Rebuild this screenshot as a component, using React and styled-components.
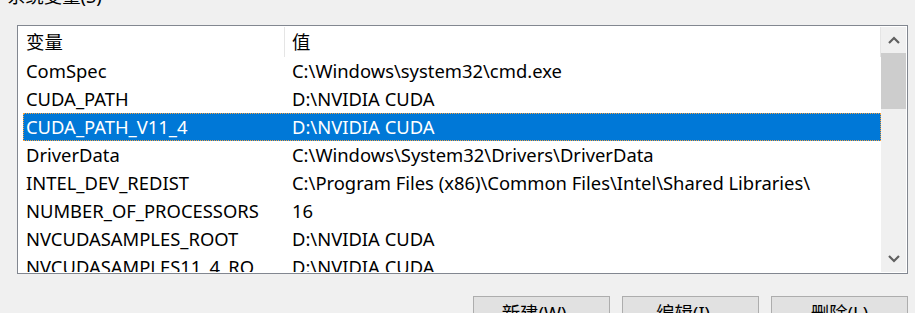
import React from 'react';
import styled, { createGlobalStyle } from 'styled-components';

const GlobalStyle = createGlobalStyle`
  html, body {
    margin: 0;
    padding: 0;
    background: #f0f0f0;
    overflow: hidden;
  }
  body {
    font-family: "Noto Sans", "Noto Sans CJK SC", sans-serif;
    font-size: 18.4px;
    color: #000;
  }
`;

const Page = styled.div`
  width: 915px;
  height: 313px;
  overflow: hidden;
  display: flex;
  flex-direction: column;
`;

const GroupTitle = styled.div`
  margin: -16px 0 0 7px;
  height: 24px;
  line-height: 24px;
`;

const ListBox = styled.div`
  margin: 17px 0 0 17px;
  width: 891px;
  height: 249px;
  box-sizing: border-box;
  border: 1px solid #828790;
  background: #fff;
  padding: 1px;
  display: flex;
`;

const ListBody = styled.div`
  flex: 1;
  overflow: hidden;
  padding-left: 4px;
`;

const HeaderRow = styled.div`
  display: grid;
  grid-template-columns: 262px 1fr;
  height: 30px;
  align-items: center;
`;

const HeaderCell = styled.div`
  height: 30px;
  line-height: 30px;
  padding-left: ${(p) => p.$pad}px;
  border-right: 1px solid #e5e5e5;
  box-sizing: border-box;
`;

const Row = styled.div`
  display: grid;
  grid-template-columns: 262px 1fr;
  height: 28px;
  line-height: 28px;
  box-sizing: border-box;
  white-space: nowrap;
  background: ${(p) => (p.$selected ? '#0078d7' : 'transparent')};
  color: ${(p) => (p.$selected ? '#fff' : '#000')};
  outline: ${(p) => (p.$selected ? '1px dotted #f5a040' : 'none')};
  outline-offset: -1px;
`;

const Cell = styled.div`
  padding-left: ${(p) => p.$pad}px;
  overflow: hidden;
`;

const ScrollBar = styled.div`
  width: 25px;
  display: flex;
  flex-direction: column;
  background: #f0f0f0;
`;

const ArrowBtn = styled.div`
  height: 26px;
  display: flex;
  align-items: center;
  justify-content: center;
  flex-shrink: 0;
`;

const Track = styled.div`
  flex: 1;
  display: flex;
  flex-direction: column;
`;

const Thumb = styled.div`
  height: 56px;
  background: #cdcdcd;
`;

const ButtonRow = styled.div`
  display: flex;
  justify-content: flex-end;
  gap: 12px;
  margin-top: 22px;
  padding-right: 7px;
`;

const DialogButton = styled.button`
  width: 137px;
  height: 34px;
  box-sizing: border-box;
  background: #e1e1e1;
  border: 1px solid #adadad;
  font-family: "Noto Sans", "Noto Sans CJK SC", sans-serif;
  font-size: 18.4px;
  color: #000;
  padding: 0;
  line-height: 32px;
`;

const Chevron = ({ up }) => (
  <svg width="12" height="8" viewBox="0 0 12 8">
    <polyline
      points={up ? '1,7 6,2 11,7' : '1,1 6,6 11,1'}
      fill="none"
      stroke="#606060"
      strokeWidth="2.2"
    />
  </svg>
);

const rows = [
  ['ComSpec', 'C:\\Windows\\system32\\cmd.exe'],
  ['CUDA_PATH', 'D:\\NVIDIA CUDA'],
  ['CUDA_PATH_V11_4', 'D:\\NVIDIA CUDA'],
  ['DriverData', 'C:\\Windows\\System32\\Drivers\\DriverData'],
  ['INTEL_DEV_REDIST', 'C:\\Program Files (x86)\\Common Files\\Intel\\Shared Libraries\\'],
  ['NUMBER_OF_PROCESSORS', '16'],
  ['NVCUDASAMPLES_ROOT', 'D:\\NVIDIA CUDA'],
  ['NVCUDASAMPLES11_4_RO', 'D:\\NVIDIA CUDA'],
];

const App = () => (
  <>
    <GlobalStyle />
    <Page>
      <GroupTitle>系统变量(S)</GroupTitle>
      <ListBox>
        <ListBody>
          <HeaderRow>
            <HeaderCell $pad={3}>变量</HeaderCell>
            <HeaderCell $pad={7}>值</HeaderCell>
          </HeaderRow>
          {rows.map(([name, value], i) => (
            <Row key={name} $selected={i === 2}>
              <Cell $pad={3}>{name}</Cell>
              <Cell $pad={7}>{value}</Cell>
            </Row>
          ))}
        </ListBody>
        <ScrollBar>
          <ArrowBtn>
            <Chevron up />
          </ArrowBtn>
          <Track>
            <Thumb />
          </Track>
          <ArrowBtn>
            <Chevron />
          </ArrowBtn>
        </ScrollBar>
      </ListBox>
      <ButtonRow>
        <DialogButton>新建(W)...</DialogButton>
        <DialogButton>编辑(I)...</DialogButton>
        <DialogButton>删除(L)</DialogButton>
      </ButtonRow>
    </Page>
  </>
);

export default App;
